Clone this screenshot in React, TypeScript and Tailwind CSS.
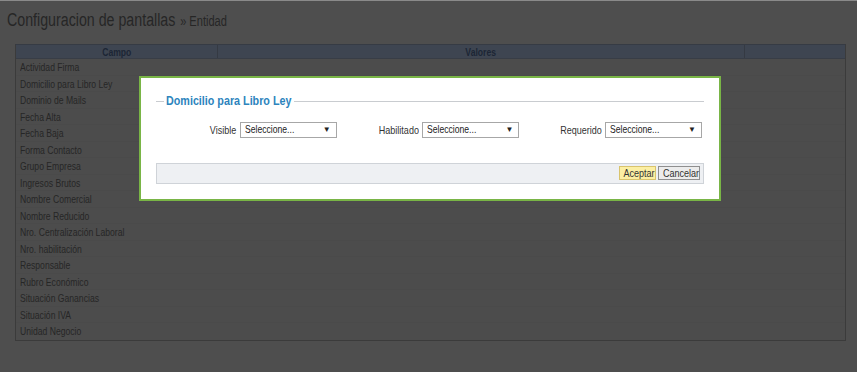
import type { ReactNode } from "react";

const campos = [
  "Actividad Firma",
  "Domicilio para Libro Ley",
  "Dominio de Mails",
  "Fecha Alta",
  "Fecha Baja",
  "Forma Contacto",
  "Grupo Empresa",
  "Ingresos Brutos",
  "Nombre Comercial",
  "Nombre Reducido",
  "Nro. Centralización Laboral",
  "Nro. habilitación",
  "Responsable",
  "Rubro Económico",
  "Situación Ganancias",
  "Situación IVA",
  "Unidad Negocio",
];

const selects = ["Visible", "Habilitado", "Requerido"];

// the screenshot's font is narrower than Arial, so text is squeezed a bit
function N({ children, className = "" }: { children: ReactNode; className?: string }) {
  return <span className={`inline-block whitespace-nowrap scale-x-[0.82] ${className}`}>{children}</span>;
}

function Select() {
  return (
    <div className="flex h-[16px] w-[97px] items-center justify-between border border-[#a7a7a7] bg-white pl-[4px] pr-[5px] text-[10.5px] text-[#222]">
      <N className="origin-left">Seleccione...</N>
      <span className="text-[8px]">▼</span>
    </div>
  );
}

export default function App() {
  return (
    <div className="relative h-[372px] w-full overflow-hidden border-t border-[#8a8a8a] bg-[#4e4e4e] font-['Liberation_Sans',Arial,sans-serif]">
      <div className="pl-[7px] pt-[8px] leading-[22px] text-[#262626]">
        <span className="inline-block origin-left scale-x-[0.79] whitespace-nowrap">
          <span className="text-[18px]">Configuracion de pantallas</span>
          <span className="ml-[6px] text-[14px]">» Entidad</span>
        </span>
      </div>

      <div className="ml-[15px] mt-[12px] w-[831px] border border-[#3b3b3b] border-t-[#363b44]">
        <div className="flex h-[14px] border-b border-[#383d46] bg-[#3e4551] text-[10.5px] font-bold leading-[14px] text-[#1c2535]">
          <div className="w-[202px] border-r border-[#353a43] text-center">
            <N>Campo</N>
          </div>
          <div className="w-[527px] border-r border-[#353a43] text-center">
            <N>Valores</N>
          </div>
          <div className="flex-1" />
        </div>
        {campos.map((c) => (
          <div
            key={c}
            className="h-[16.5px] border-b border-[#4a4a4a] bg-[#4c4c4c] pl-[4px] text-[10.5px] leading-[16.5px] text-[#262626] last:border-b-0"
          >
            <N className="origin-left">{c}</N>
          </div>
        ))}
      </div>

      <div className="absolute left-[139px] top-[75px] w-[582px] border-2 border-[#79b546] bg-white px-[15px] pb-[15px] pt-[14px]">
        <div className="flex items-center">
          <div className="h-px w-[8px] bg-[#c9ccd0]" />
          <span className="w-[130px] px-[2px] text-[12.5px] font-bold leading-[18px] text-[#2d84bd]">
            <span className="inline-block origin-left scale-x-[0.86] whitespace-nowrap">Domicilio para Libro Ley</span>
          </span>
          <div className="h-px flex-1 bg-[#c9ccd0]" />
        </div>

        <div className="mt-[12px] grid grid-cols-3">
          {selects.map((s) => (
            <div key={s} className="flex items-center justify-end gap-[3px] pr-[2px] text-[11px] text-[#333]">
              <N className="origin-right">{s}</N>
              <Select />
            </div>
          ))}
        </div>

        <div className="mt-[24px] flex h-[21px] items-center justify-end gap-[2px] border border-[#cfd3d8] bg-[#eef0f3] pr-[3px] text-[11px] text-[#333]">
          <button className="h-[14px] w-[37px] border border-[#d9c46d] bg-[#fcefa3] leading-[12px]">
            <N>Aceptar</N>
          </button>
          <button className="h-[14px] w-[42px] border border-[#8f8f8f] bg-[#ececec] leading-[12px]">
            <N>Cancelar</N>
          </button>
        </div>
      </div>
    </div>
  );
}
